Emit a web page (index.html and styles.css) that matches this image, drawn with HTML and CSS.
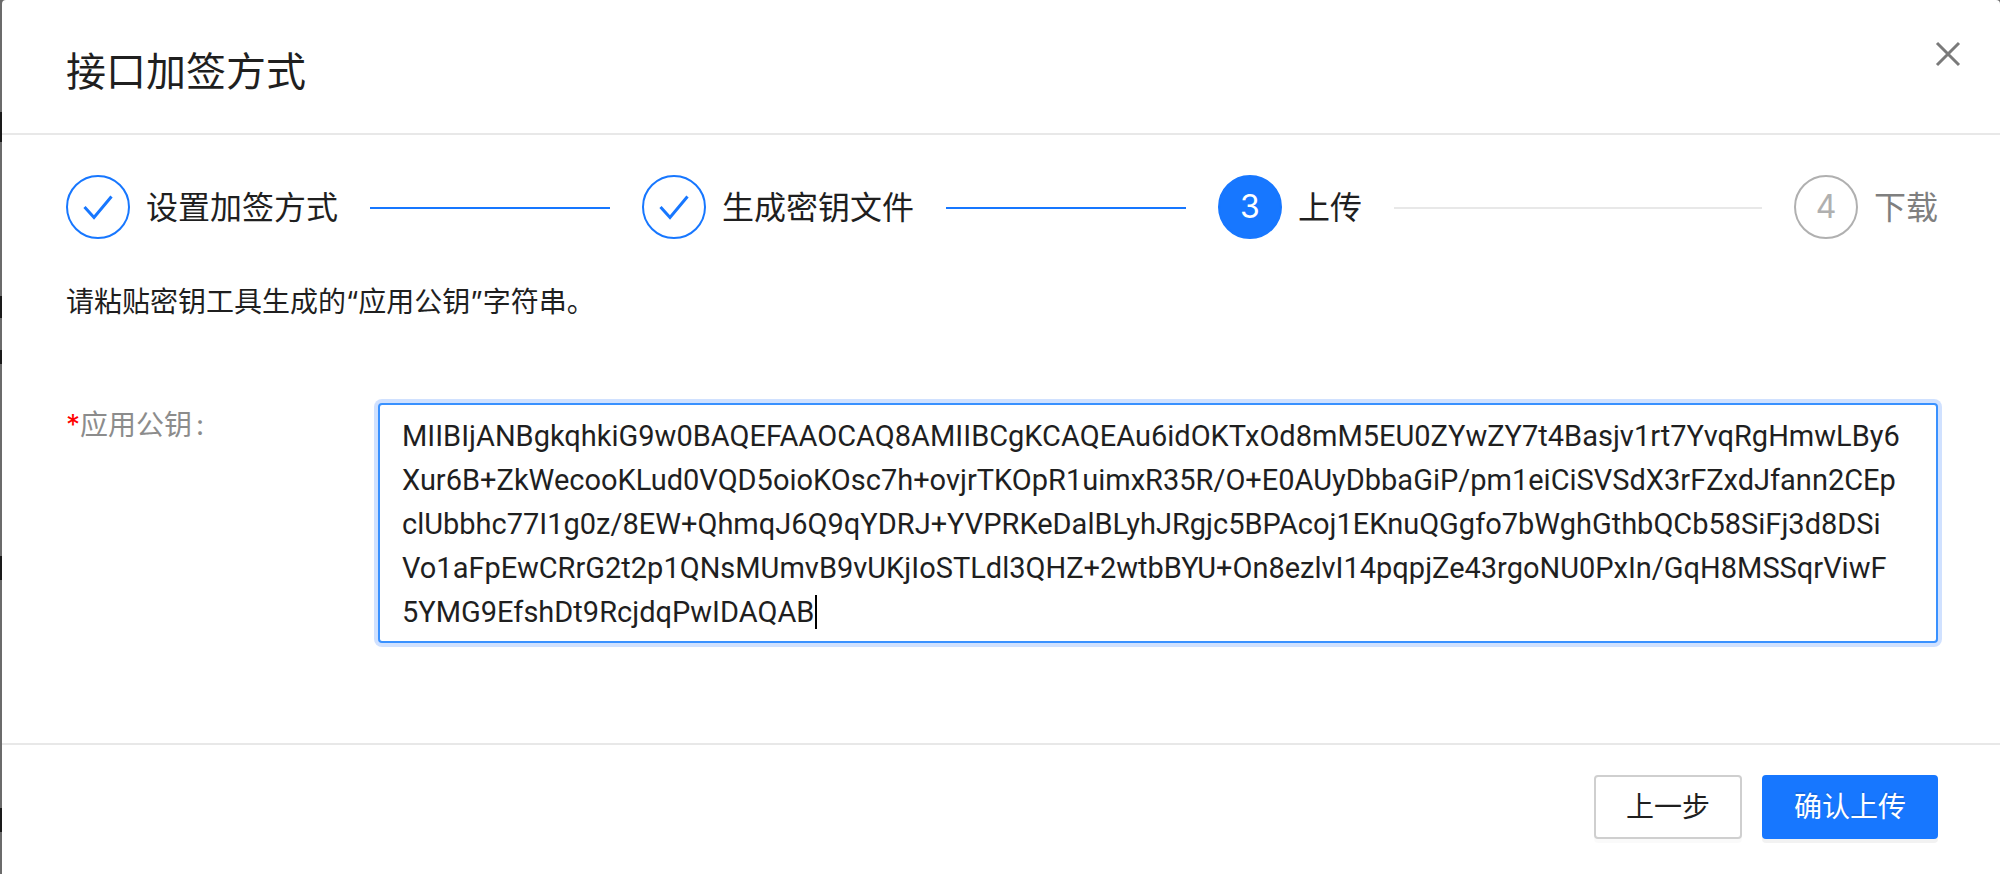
FILE: index.html
```html
<!DOCTYPE html>
<html lang="zh-CN">
<head>
    <meta charset="UTF-8">
    <meta name="viewport" content="width=device-width, initial-scale=1.0">
    <title>接口加签方式</title>
    <link rel="stylesheet" href="styles.css">
</head>
<body>

<form class="modal">
    <header class="modal-header">
        <h1>接口加签方式</h1>
        <button type="button" class="close" aria-label="关闭">
            <svg width="28" height="28" viewBox="0 0 28 28"><path d="M3 3L25 25M25 3L3 25"/></svg>
        </button>
    </header>

    <main class="modal-body">
        <ol class="steps">
            <li class="step finish">
                <span class="step-icon">
                    <svg width="60" height="60" viewBox="0 0 60 60"><path d="M16.500 30L26 40.500L43.500 19.500"/></svg>
                </span>
                <span class="step-title">设置加签方式</span>
            </li>
            <li class="step finish">
                <span class="step-icon">
                    <svg width="60" height="60" viewBox="0 0 60 60"><path d="M16.500 30L26 40.500L43.500 19.500"/></svg>
                </span>
                <span class="step-title">生成密钥文件</span>
            </li>
            <li class="step active">
                <span class="step-icon">3</span>
                <span class="step-title">上传</span>
            </li>
            <li class="step wait">
                <span class="step-icon">4</span>
                <span class="step-title">下载</span>
            </li>
        </ol>

        <p class="tip">请粘贴密钥工具生成的“应用公钥”字符串。</p>

        <div class="form-item">
            <label for="publicKey"><span class="required">*</span>应用公钥<span class="colon">:</span></label>
            <div class="field">
                <textarea id="publicKey" rows="5" spellcheck="false">MIIBIjANBgkqhkiG9w0BAQEFAAOCAQ8AMIIBCgKCAQEAu6idOKTxOd8mM5EU0ZYwZY7t4Basjv1rt7YvqRgHmwLBy6
Xur6B+ZkWecooKLud0VQD5oioKOsc7h+ovjrTKOpR1uimxR35R/O+E0AUyDbbaGiP/pm1eiCiSVSdX3rFZxdJfann2CEp
clUbbhc77I1g0z/8EW+QhmqJ6Q9qYDRJ+YVPRKeDalBLyhJRgjc5BPAcoj1EKnuQGgfo7bWghGthbQCb58SiFj3d8DSi
Vo1aFpEwCRrG2t2p1QNsMUmvB9vUKjIoSTLdl3QHZ+2wtbBYU+On8ezlvI14pqpjZe43rgoNU0PxIn/GqH8MSSqrViwF
5YMG9EfshDt9RcjdqPwIDAQAB</textarea>
                <span class="caret"></span>
            </div>
        </div>
    </main>

    <footer class="modal-footer">
        <button type="button" class="btn">上一步</button>
        <button type="submit" class="btn btn-primary">确认上传</button>
    </footer>
</form>

</body>
</html>
```
FILE: styles.css
```css
:root{
    --primary: #1777ff;
    --text-color: #1f1f1f;
    --gray-text: #8c8c8c;
    --line: #e8e8e8;
    --mask: #6b6b6b;
    --mask-text: #1a1a1a;
}

*{
    padding: 0;
    margin: 0;
    box-sizing: border-box;
}

/* dimmed page behind the dialog */
body{
    padding-left: 2px;
    min-height: 100vh;
    display: flex;
    font-family: Inter, "Noto Sans CJK SC", sans-serif;
    font-size: 28px;
    line-height: 44px;
    color: var(--text-color);
    background: linear-gradient(
        var(--mask) 112px, var(--mask-text) 112px 142px,
        var(--mask) 142px 296px, var(--mask-text) 296px 318px,
        var(--mask) 318px 350px, var(--mask-text) 350px 364px,
        var(--mask) 364px 556px, var(--mask-text) 556px 580px,
        var(--mask) 580px 808px, var(--mask-text) 808px 832px,
        var(--mask) 832px
    );
}

button, textarea{
    font: inherit;
    color: inherit;
}

.modal{
    flex: 1;
    display: flex;
    flex-direction: column;
    background: #fff;
    border-radius: 4px 4px 0 0;
}

.modal-header{
    display: flex;
    justify-content: space-between;
    align-items: flex-start;
    padding: 40px 38px 29px 64px;
    border-bottom: 2px solid var(--line);
}

.modal-header h1{
    font-size: 40px;
    font-weight: 400;
    line-height: 64px;
}

.close{
    display: flex;
    border: none;
    background: none;
    cursor: pointer;
}

.close svg{
    fill: none;
    stroke: #7a7a7a;
    stroke-width: 3;
}

.modal-body{
    flex: 1;
    padding: 40px 62px 100px 64px;
}

.steps{
    display: flex;
    gap: 32px;
    list-style: none;
    font-size: 32px;
    line-height: 48px;
}

.step{
    flex: 1;
    display: flex;
    align-items: center;
    gap: 16px;
}

.step:last-child{
    flex: none;
}

.step:not(:last-child)::after{
    content: "";
    flex: 1;
    height: 2px;
    margin: 2px 0 0 16px;
    background: var(--primary);
}

.step.active::after{
    background: var(--line);
}

.step-icon{
    display: flex;
    align-items: center;
    justify-content: center;
    width: 64px;
    height: 64px;
    border: 2px solid var(--primary);
    border-radius: 50%;
}

.step-icon svg{
    fill: none;
    stroke: var(--primary);
    stroke-width: 3;
}

.step-title{
    padding-top: 2px;
}

.active .step-icon{
    background: var(--primary);
    color: #fff;
}

.wait{
    color: #7f7f7f;
}

.wait .step-icon{
    border-color: #b0b0b0;
    color: #b0b0b0;
}

.tip{
    margin: 41px 0 79px;
}

.form-item{
    display: flex;
}

.form-item label{
    width: 312px;
    color: var(--gray-text);
}

.required{
    color: #f00;
}

.colon{
    margin-left: 4px;
}

.field{
    flex: 1;
    position: relative;
}

.field textarea{
    display: block;
    width: 100%;
    padding: 9px 22px 7px;
    border: 2px solid #3991ff;
    border-radius: 4px;
    outline: none;
    box-shadow: 0 0 0 4px #d0e1ff;
    resize: none;
    overflow: hidden;
    white-space: pre;
    font-family: Roboto, sans-serif;
    font-size: 29px;
    caret-color: transparent;
}

.caret{
    position: absolute;
    left: 437px;
    bottom: 14px;
    width: 2px;
    height: 34px;
    background: #000;
}

.modal-footer{
    display: flex;
    justify-content: flex-end;
    gap: 20px;
    padding: 30px 62px 35px;
    border-top: 2px solid var(--line);
}

.btn{
    height: 64px;
    padding: 0 30px;
    border: 2px solid #cfcfcf;
    border-radius: 4px;
    background: #fff;
    box-shadow: 0 4px 0 rgba(0, 0, 0, 0.02);
    cursor: pointer;
}

.btn-primary{
    border-color: var(--primary);
    background: var(--primary);
    color: #fff;
    text-shadow: 0 -2px 0 rgba(0, 0, 0, 0.12);
    box-shadow: 0 4px 0 rgba(0, 0, 0, 0.05);
}
```
